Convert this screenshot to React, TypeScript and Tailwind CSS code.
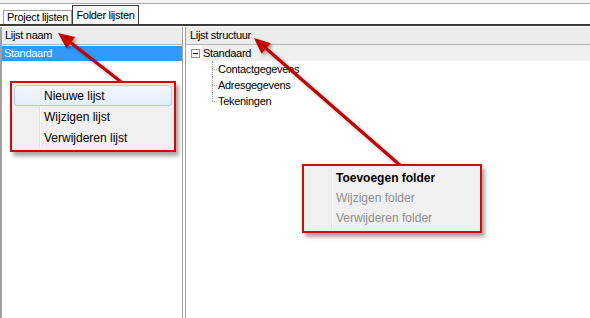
const Menu = ({
  items,
  className,
}: {
  items: { label: string; bold?: boolean; disabled?: boolean; hover?: boolean }[];
  className: string;
}) => {
  return (
    <div
      className={`absolute border-2 border-[#cf0a0a] bg-[#f0f0f0] p-[2px] tracking-normal shadow-[3px_4px_4px_rgba(0,0,0,0.35)] ${className}`}
    >
      <div className="relative h-full">
        <div className="absolute top-0 bottom-0 left-[25px] w-[2px] border-l border-[#e2e3e3] bg-white" />
        {items.map((item) => (
          <div
            key={item.label}
            className={`relative flex items-center pl-[29px] text-[12px] ${
              item.hover
                ? "rounded-[3px] border border-[#aeccf1] bg-gradient-to-b from-[#f2f7fe] to-[#e3edfb]"
                : "border border-transparent"
            } ${item.bold ? "font-bold text-black" : ""} ${
              item.disabled ? "text-[#8d8d8d]" : "text-black"
            } h-[var(--row)]`}
          >
            {item.label}
          </div>
        ))}
      </div>
    </div>
  );
};

const ChildRow = ({ label, last }: { label: string; last?: boolean }) => (
  <div className="flex h-[16px] items-center pl-[26px]">
    <div className="relative h-full w-[6px]">
      <span
        className={`absolute left-0 top-0 border-l border-dotted border-[#a0a0a0] ${
          last ? "h-[8px]" : "h-full"
        }`}
      />
      <span className="absolute left-0 top-[8px] w-[5px] border-t border-dotted border-[#a0a0a0]" />
    </div>
    <span>{label}</span>
  </div>
);

export default function App() {
  return (
    <div className="relative h-[318px] w-[590px] overflow-hidden bg-white font-['Liberation_Sans',Arial,sans-serif] text-[11px] tracking-[-0.3px] text-black">
      {/* top strip */}
      <div className="h-[4px] border-b border-[#a7a7a7] bg-[#f4f4f4]" />

      {/* tabs */}
      <div className="flex h-[22px] items-end border-b-2 border-[#3a3a3a] pl-[3px]">
        <div className="flex h-[14px] w-[69px] items-center justify-center border border-b-0 border-[#9a9a9a] bg-white">
          Project lijsten
        </div>
        <div className="flex h-[19px] w-[67px] items-center justify-center border border-b-0 border-[#3a3a3a] bg-[#f7f7f7]">
          Folder lijsten
        </div>
      </div>

      {/* panels */}
      <div className="flex h-[292px] pt-[1px]">
        <div className="flex w-[183px] flex-col border-l-2 border-r border-[#a0a0a0]">
          <div className="flex h-[18px] items-center border-b border-[#b5b5b5] bg-[#ececec] pl-[3px]">
            Lijst naam
          </div>
          <div className="mt-[1px] flex h-[15px] items-center bg-[#3399ff] pl-[2px] text-white">
            Standaard
          </div>
        </div>
        <div className="ml-[2px] flex flex-1 flex-col border-l border-[#a0a0a0]">
          <div className="flex h-[18px] items-center border-b border-[#b5b5b5] bg-[#ececec] pl-[4px]">
            Lijst structuur
          </div>
          <div className="flex h-[16px] items-center pl-[5px]">
            <div className="relative flex h-[9px] w-[9px] items-center justify-center border border-[#919191] bg-white">
              <span className="block h-[1px] w-[5px] bg-black" />
            </div>
            <div className="ml-[2px] flex h-full flex-1 items-center bg-[#efefef] pl-[1px]">
              Standaard
            </div>
          </div>
          <ChildRow label="Contactgegevens" />
          <ChildRow label="Adresgegevens" />
          <ChildRow label="Tekeningen" last />
        </div>
      </div>

      {/* arrows */}
      <svg
        className="pointer-events-none absolute left-0 top-0 drop-shadow-[2px_2px_1.5px_rgba(0,0,0,0.35)]"
        width="590"
        height="318"
      >
        <line x1="129" y1="88" x2="70.8" y2="42.7" stroke="#c40000" strokeWidth="3" />
        <polygon points="58,33 75.1,37.1 66.5,48.3" fill="#c40000" />
        <line x1="401" y1="166" x2="266.1" y2="48.5" stroke="#c40000" strokeWidth="3" />
        <polygon points="254,38 270.7,43.2 261.5,53.8" fill="#c40000" />
      </svg>

      <Menu
        className="left-[10px] top-[81px] h-[71px] w-[166px] [--row:21px]"
        items={[
          { label: "Nieuwe lijst", hover: true },
          { label: "Wijzigen lijst" },
          { label: "Verwijderen lijst" },
        ]}
      />
      <Menu
        className="left-[302px] top-[164px] h-[69px] w-[180px] [--row:20px]"
        items={[
          { label: "Toevoegen folder", bold: true },
          { label: "Wijzigen folder", disabled: true },
          { label: "Verwijderen folder", disabled: true },
        ]}
      />
    </div>
  );
}
